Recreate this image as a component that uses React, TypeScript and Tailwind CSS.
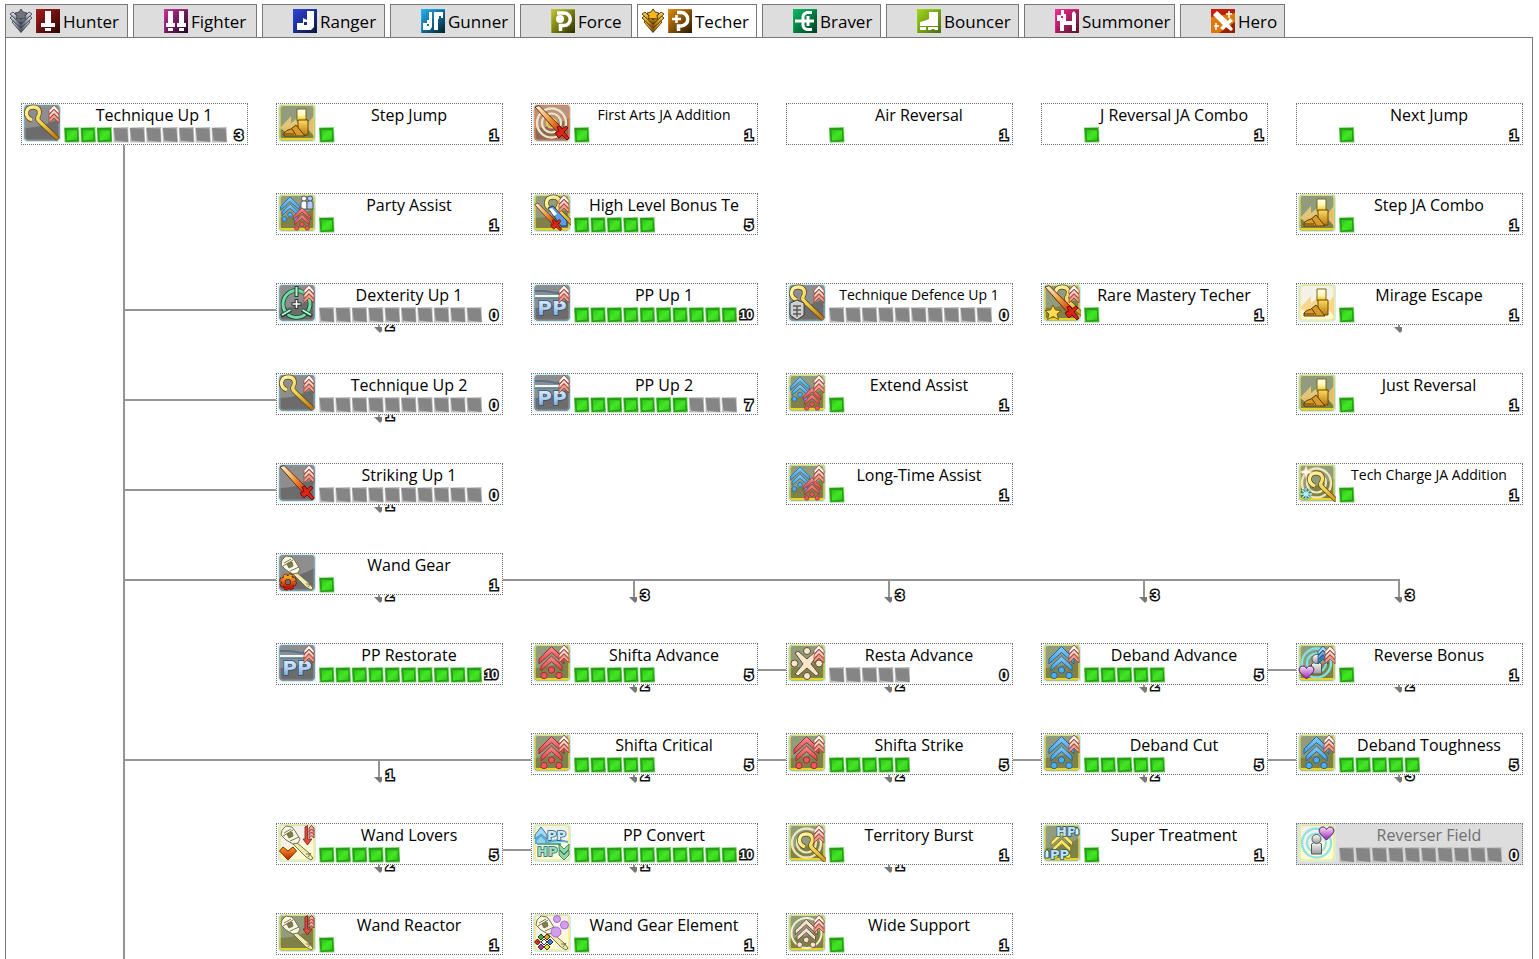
import type { ReactNode } from "react";

type TileKind = "gray" | "olive" | "light" | "orange";

/* ---------- shared gradients ---------- */

function Gradient({ id, from, to, mid, diagonal }: { id: string; from: string; to: string; mid?: string; diagonal?: boolean }) {
  return (
    <linearGradient id={id} x1="0" y1="0" x2={diagonal ? "1" : "0"} y2="1">
      <stop offset="0" stopColor={from} />
      {mid && <stop offset="0.5" stopColor={mid} />}
      <stop offset="1" stopColor={to} />
    </linearGradient>
  );
}

function Gradients() {
  return (
    <svg className="absolute h-0 w-0" aria-hidden="true">
      <defs>
        <Gradient id="pipOn" from="#2fc01c" mid="#41e822" to="#34c81e" diagonal />
        <Gradient id="wood" from="#fff6a8" mid="#f0d24a" to="#b8700c" diagonal />
        <Gradient id="blade" from="#fffbe0" mid="#f0a040" to="#c81808" diagonal />
        <Gradient id="boot" from="#ffdc60" to="#b87a10" />
        <Gradient id="shaft" from="#ffffff" mid="#fff8b0" to="#e8c020" />
        <Gradient id="pp" from="#f0f8ff" mid="#b4d4f4" to="#5c8ed0" />
        <Gradient id="redArrow" from="#fa9090" to="#e03c44" />
        <Gradient id="blueArrow" from="#84ccfa" to="#3c9ce8" />
        <Gradient id="heart" from="#f8e0fa" to="#9a20b0" />
        <Gradient id="fire" from="#f8a020" to="#c81808" />
        <Gradient id="stone" from="#ffffff" to="#9a9a9a" />
        <Gradient id="silver" from="#e8ecf4" mid="#8c94a4" to="#2c3038" />
        <Gradient id="gold" from="#ffe050" mid="#d49418" to="#5c3404" />
      </defs>
    </svg>
  );
}

/* ---------- class tabs ---------- */

function ClassIcon({ id, from, to, children }: { id: string; from: string; to: string; children: ReactNode }) {
  return (
    <svg viewBox="0 0 24 24" className="h-6 w-6 shrink-0" aria-hidden="true">
      <defs>
        <Gradient id={id} from={from} to={to} diagonal />
      </defs>
      <rect width="24" height="24" fill={`url(#${id})`} />
      <path d="M0 24V0H24" fill="none" stroke={from} />
      {children}
    </svg>
  );
}

function Emblem({ fill, dark, star }: { fill: string; dark: string; star: string }) {
  return (
    <svg viewBox="0 0 24 24" className="h-6 w-6" aria-hidden="true">
      <g fill={fill} stroke={dark} strokeWidth="0.900" strokeLinejoin="round">
        <path d="M3 13 6 11 12 18 18 11 21 13 12 23.500Z" />
        <path d="M1 9 4 6.500 12 15 20 6.500 23 9 12 19.500Z" />
        <path d="M1 5 4 3 12 11 20 3 23 5 12 15.500Z" />
        <path d="M12 0 14 3 18 4 16 6.500 16.500 10 12 9.500 7.500 10 8 6.500 6 4 10 3Z" fill={star} />
      </g>
    </svg>
  );
}

const silver = <Emblem fill="url(#silver)" dark="#40444c" star="#70747c" />;
const gold = <Emblem fill="url(#gold)" dark="#4a3410" star="#f4b81c" />;

const classes: { name: string; width: string; emblem?: ReactNode; active?: boolean; icon: ReactNode }[] = [
  {
    name: "Hunter",
    width: "w-[123px]",
    emblem: silver,
    icon: (
      <ClassIcon id="cHunter" from="#a81c1c" to="#2c0404">
        <path d="M9 2h6v12h4v4H5v-4h4zM9 19h6v3H9z" fill="#fff" />
      </ClassIcon>
    ),
  },
  {
    name: "Fighter",
    width: "w-[124px]",
    icon: (
      <ClassIcon id="cFighter" from="#c8329c" to="#20081c">
        <path d="M4 2h5v12h2v4H2v-4h2zM4 19h5v3H4zM15 2h5v12h2v4h-9v-4h2zM15 19h5v3h-5z" fill="#fff" />
      </ClassIcon>
    ),
  },
  {
    name: "Ranger",
    width: "w-[123px]",
    icon: (
      <ClassIcon id="cRanger" from="#2c44e0" to="#0c1438">
        <path d="M14 2h7v16l-3 3H4v-7h6V9l4 2z" fill="#fff" />
        <path d="M11 13h3v3h-3z" fill="#1c2c90" />
      </ClassIcon>
    ),
  },
  {
    name: "Gunner",
    width: "w-[125px]",
    icon: (
      <ClassIcon id="cGunner" from="#24b4f8" to="#02202c">
        <path d="M8 3h3v15l-2 3H2v-7h4v-3h2zM13 3h9v6h-2V7h-2v3h-1v11h-4z" fill="#fff" />
        <path d="M6 15h2v2H6z" fill="#1478a0" />
      </ClassIcon>
    ),
  },
  {
    name: "Force",
    width: "w-[112px]",
    icon: (
      <ClassIcon id="cForce" from="#c4cc30" to="#2c2c00">
        <path d="M6 4h7a6 6 0 0 1 0 12.500H9.500V22" fill="none" stroke="#fff" strokeWidth="3.500" />
        <circle cx="9" cy="10" r="4" fill="#fff" />
      </ClassIcon>
    ),
  },
  {
    name: "Techer",
    width: "w-[120px]",
    emblem: gold,
    active: true,
    icon: (
      <ClassIcon id="cTecher" from="#dc8c10" to="#2c1800">
        <path d="M9 3.500h4a6 6 0 0 1 0 13.500H10.500V22" fill="none" stroke="#fff" strokeWidth="3.500" />
        <path d="M4 10h9M8.500 6v8" stroke="#fff" strokeWidth="2.500" />
      </ClassIcon>
    ),
  },
  {
    name: "Braver",
    width: "w-[119px]",
    icon: (
      <ClassIcon id="cBraver" from="#0cbc64" to="#003c20">
        <path d="M19 3.500h-5a5 5 0 0 0-4 4v9a5 5 0 0 0 4 4h5M2 12h19M15 7v10" fill="none" stroke="#fff" strokeWidth="3" />
      </ClassIcon>
    ),
  },
  {
    name: "Bouncer",
    width: "w-[133px]",
    icon: (
      <ClassIcon id="cBouncer" from="#a0d81c" to="#4c6c10">
        <path d="M12 3h9v14H3v-4l4-1 5-2zM3 18h6v3H3zM11 18h10v3h-3l-1-1h-2l-1 1h-3z" fill="#fff" />
      </ClassIcon>
    ),
  },
  {
    name: "Summoner",
    width: "w-[151px]",
    icon: (
      <ClassIcon id="cSummoner" from="#f82c98" to="#541428">
        <path d="M6 1h3v4h2v7h6V4l2-2 2 3v17h-4v-6H9v6H5V12H2V6h4z" fill="#fff" />
        <path d="M6 7h2v2H6z" fill="#d02878" />
      </ClassIcon>
    ),
  },
  {
    name: "Hero",
    width: "w-[105px]",
    icon: (
      <ClassIcon id="cHero" from="#d02008" to="#8c2004">
        <path d="M0 8 24 4V13L8 24H0Z" fill="#f0a010" opacity="0.7" />
        <path d="M2 6 6 2 17 12 19 9 22 12 18 15 22 20 20 22 15 18 12 21 9 19 12 16Z" fill="#fff" />
        <path d="M18 2v7M15 5h6M5 14v7M3 17h5" stroke="#fff" strokeWidth="1.500" />
      </ClassIcon>
    ),
  },
];

/* ---------- skill icons, drawn on a 38 x 38 tile ---------- */

const tileStyle: Record<TileKind, { top: string; bottom: string; edge: string }> = {
  gray: { top: "#8e8e8e", bottom: "#6c6c6c", edge: "#8a969a" },
  olive: { top: "#919c7c", bottom: "#7f8248", edge: "#ecdf4a" },
  light: { top: "#f4f1e8", bottom: "#fffbd8", edge: "#f8e468" },
  orange: { top: "#b99280", bottom: "#8c6a58", edge: "#ee8048" },
};

function Tile({ kind, children }: { kind: TileKind; children: ReactNode }) {
  const t = tileStyle[kind];
  return (
    <svg viewBox="0 0 38 38" className="block h-[38px] w-[38px]" aria-hidden="true">
      <rect width="38" height="38" rx="4" fill="#c9eef8" />
      <rect x="1.500" y="1" width="35" height="35.500" rx="3" fill={t.top} />
      <path d="M1.500 24C14 24 26 20 36.500 14V33.500a3 3 0 0 1-3 3h-29a3 3 0 0 1-3-3Z" fill={t.bottom} />
      <rect x="2" y="1.500" width="34" height="34.500" rx="3" fill="none" stroke={t.edge} strokeWidth="1.200" />
      {kind === "olive" && <path d="M3 35H35" stroke="#e8d428" strokeWidth="2" />}
      {children}
    </svg>
  );
}

function Ups({ x = 26, y = 1, blue = false }: { x?: number; y?: number; blue?: boolean }) {
  const fills = blue ? ["#a8d8f8", "#68b0e8", "#3880c8"] : ["#fffaf6", "#fcd4c6", "#f49c88"];
  return (
    <g transform={`translate(${x} ${y})`} stroke={blue ? "#284868" : "#9c4038"} strokeWidth="0.800" strokeLinejoin="round">
      {fills.map((f, i) => (
        <path key={f} transform={`translate(0 ${i * 4.5})`} d="M0 5.500 5 0 10 5.500V9L5 4 0 9Z" fill={f} />
      ))}
    </g>
  );
}

function Crook({ x = 0, y = 0 }: { x?: number; y?: number }) {
  const d = "M9 16C1 13 2 3 10 3C18 3 17 10 15 13C14 15 15 16 17 18L35 35";
  return (
    <g transform={`translate(${x} ${y})`} fill="none" strokeLinejoin="round">
      <path d={d} stroke="#5a4418" strokeWidth="4.800" />
      <path d={d} stroke="url(#wood)" strokeWidth="3.400" />
    </g>
  );
}

function Sword() {
  return (
    <g strokeLinejoin="round">
      <path d="M2 3 6 1.500 30 25 25 29Z" fill="url(#blade)" stroke="#6c2c18" />
      <path d="M24 32 22 29 26 27 24 23 27 22 29 25 33 22 35 24 31 28 36 34 34 36 29 31 26 34Z" fill="#dc2414" stroke="#700c08" />
    </g>
  );
}

function PPBars() {
  return (
    <g>
      <path d="M2 7H10C18 7 18 9 26 9H36" fill="none" stroke="#52748c" strokeWidth="2" />
      <path d="M2 12H36" stroke="#e8fbff" strokeWidth="2" />
      <path d="M2 14.500H36" stroke="#4a8ca4" />
      <text x="19" y="31" textAnchor="middle" fontFamily="DejaVu Sans" fontWeight="700" fontSize="20" fill="url(#pp)" stroke="#34506c" strokeWidth="1.500" paintOrder="stroke">
        PP
      </text>
    </g>
  );
}

function Boot() {
  return (
    <g strokeLinejoin="round">
      <path d="M2 24 13 12V19L22 12V33L13 26V32ZM27 22 36 12V32Z" fill="#f6cf78" opacity="0.8" />
      <path d="M19 5H28V17H19Z" fill="url(#shaft)" stroke="#7c6414" />
      <path d="M20 16H30V31H24L20 24Z" fill="url(#boot)" stroke="#684408" />
      <path d="M6 32V29Q8 26 13 25L18 21 27 32Z" fill="#d89a28" stroke="#5c3c08" />
      <path d="M14 25 18 31M6 30H16" stroke="#5c3c08" fill="none" />
    </g>
  );
}

function House({ color, x = 0, y = 0, s = 1 }: { color: "red" | "blue" | "cream" | "yellow"; x?: number; y?: number; s?: number }) {
  const fill = { red: "url(#redArrow)", blue: "url(#blueArrow)", cream: "#fbe0d0", yellow: "#fbe868" }[color];
  const dark = { red: "#94303a", blue: "#2c6490", cream: "#5c4c38", yellow: "#7c7020" }[color];
  const dot = { red: "#f4545c", blue: "#4cacf4", cream: "#fbe0d0", yellow: "#fbe868" }[color];
  return (
    <g transform={`translate(${x} ${y}) scale(${s})`} fill={fill} stroke={dark} strokeWidth="1" strokeLinejoin="round">
      <path d="M18.500 2.500 31 15V20L18.500 8.500 6 20V15Z" />
      <path d="M18.500 12 29 22V27L18.500 17.500 8 27V22Z" />
      <g fill={dot}>
        <circle cx="18.500" cy="26" r="3.200" />
        <circle cx="11" cy="31.500" r="3.200" />
        <circle cx="26" cy="31.500" r="3.200" />
      </g>
    </g>
  );
}

function Club() {
  return (
    <g strokeLinejoin="round" stroke="#6c683c" strokeWidth="0.900" fill="#faf8e4">
      <path d="M18 18 31 29 35 34 33 36 28 33 15 20Z" fill="#f0eab0" />
      <path d="M4 6 8 2 14 3 17 7 22 15 20 19 15 20 8 16 3 11Z" />
      <path d="M6 9 13 5M5 12 15 6M12 17 21 13" fill="none" />
      <path d="M9 10 14 8 15 12 11 14Z" fill="#7c7c54" />
      <path d="M28 30 33 30M30 33 33 29" fill="none" />
    </g>
  );
}

function Rings({ color = "#eee6b8" }: { color?: string }) {
  return (
    <g fill="none" stroke={color}>
      <circle cx="18.500" cy="19" r="14.500" strokeWidth="2.400" />
      <circle cx="18.500" cy="19" r="9.500" strokeWidth="2.200" />
    </g>
  );
}

function Person() {
  return (
    <g fill="url(#stone)" stroke="#50585c">
      <path d="M13.500 30V20Q18.500 16 23.500 20V30Z" />
      <circle cx="18.500" cy="15" r="4.500" />
    </g>
  );
}

function Heart({ x, y, fill = "url(#heart)", stroke = "#502058" }: { x: number; y: number; fill?: string; stroke?: string }) {
  return (
    <path transform={`translate(${x} ${y})`} d="M7.500 14 1.500 8C-1.500 4 1 1 4 1C6 1 7 2.500 7.500 3.500C8 2.500 9 1 11 1C14 1 16.500 4 13.500 8Z" fill={fill} stroke={stroke} />
  );
}

function DownMark() {
  return (
    <g stroke="#7c1c18" strokeWidth="0.800" strokeLinejoin="round">
      <path d="M27 3 29.500 1.500V15H34L29.500 21 25 15H27Z" fill="#e04c44" />
      <path d="M31 4 33.500 1.500 36 4V14L33.500 12 31 14Z" fill="#f4a898" />
      <path d="M31 7.500 33.500 5 36 7.500M31 10.500 33.500 8 36 10.500" fill="none" />
    </g>
  );
}

function Lettering({ x, y, children, fill = "#bfe2fa" }: { x: number; y: number; children: string; fill?: string }) {
  return (
    <text x={x} y={y} fontFamily="DejaVu Sans" fontWeight="700" fontSize="13" fill={fill} stroke="#28586c" strokeWidth="1.500" paintOrder="stroke">
      {children}
    </text>
  );
}

const icons = {
  technique: <Tile kind="gray"><Crook /><Ups /></Tile>,
  boot: <Tile kind="olive"><Boot /></Tile>,
  bootLight: <Tile kind="light"><Boot /></Tile>,
  firstArts: (
    <Tile kind="orange">
      <Rings color="#efe4c4" />
      <circle cx="18.500" cy="19" r="4.500" fill="none" stroke="#f0d040" strokeWidth="2" />
      <Sword />
    </Tile>
  ),
  party: (
    <Tile kind="olive">
      <House color="blue" x={-2} y={1} s={0.76} />
      <g stroke="#34405c" strokeWidth="0.800">
        <path d="M23 15V8Q26 5 29 8V15Z" fill="#fff" />
        <circle cx="26" cy="4.500" r="2.500" fill="#fff" />
        <path d="M29 15V8Q32 5 35 8V15Z" fill="#b4c8f4" />
        <circle cx="32" cy="4.500" r="2.500" fill="#b4c8f4" />
      </g>
      <House color="red" x={11} y={12} s={0.7} />
    </Tile>
  ),
  assist: (
    <Tile kind="olive">
      <House color="blue" x={-2} y={1} s={0.76} />
      <House color="red" x={11} y={12} s={0.7} />
      <Ups />
    </Tile>
  ),
  highLevel: (
    <Tile kind="olive">
      <Crook x={10} y={0} />
      <path d="M15 14 20 12 34 27 34 32 28 32Z" fill="#5c9ce0" stroke="#1c3468" />
      <path d="M16 15 19 14 24 20 21 22Z" fill="#fff" />
      <g transform="translate(0 8) scale(0.800)"><Sword /></g>
      <Ups />
    </Tile>
  ),
  dexterity: (
    <Tile kind="gray">
      <circle cx="18.500" cy="20" r="13.500" fill="none" stroke="#204434" strokeWidth="4.600" />
      <circle cx="18.500" cy="20" r="13.500" fill="none" stroke="#70dca4" strokeWidth="3" />
      <path d="M18.500 2V13M3 32 13 26M34 32 24 26" stroke="#204434" strokeWidth="4" />
      <path d="M18.500 3V12M4 31 12.500 26M33 31 24.500 26" stroke="#b4f4d0" strokeWidth="2" />
      <path d="M18.500 15V25M13.500 20H23.500" stroke="#303030" strokeWidth="3.600" />
      <path d="M18.500 16V24M14.500 20H22.500" stroke="#f4fff8" strokeWidth="1.600" />
      <Ups />
    </Tile>
  ),
  pp: <Tile kind="gray"><PPBars /><Ups /></Tile>,
  techDefence: (
    <Tile kind="gray">
      <Crook />
      <path d="M2 19 9 16 16 19V31L9 36 2 31Z" fill="#cfcfcf" stroke="#3c3c3c" />
      <path d="M5 22H13M5 26H13M5 30H13M9 22V33" stroke="#5a5a5a" strokeWidth="1.400" />
      <Ups />
    </Tile>
  ),
  rare: (
    <Tile kind="olive">
      <Crook x={9} y={0} />
      <Sword />
      <path d="M10 21 12.500 26 18 26.500 14 30 15.500 35.500 10 32.500 4.500 35.500 6 30 2 26.500 7.500 26Z" fill="#fbdc50" stroke="#7c5810" />
      <Ups />
    </Tile>
  ),
  striking: <Tile kind="gray"><Sword /><Ups /></Tile>,
  wandGear: (
    <Tile kind="gray">
      <Club />
      <circle cx="10" cy="28" r="6.500" fill="none" stroke="#5c1408" strokeWidth="4.500" strokeDasharray="3.100 2" />
      <circle cx="10" cy="28" r="5" fill="none" stroke="#5c1408" strokeWidth="5" />
      <circle cx="10" cy="28" r="6.500" fill="none" stroke="url(#fire)" strokeWidth="3" strokeDasharray="3.100 2" />
      <circle cx="10" cy="28" r="4.700" fill="none" stroke="url(#fire)" strokeWidth="3.200" />
    </Tile>
  ),
  techCharge: (
    <Tile kind="olive">
      <Rings />
      <Crook x={8} y={6} />
      <path d="M8 1 9.500 6 15 8 9.500 10 8 15 6.500 10 1 8 6.500 6Z" fill="#fff8e8" stroke="#f0b080" strokeWidth="0.600" />
      <path d="M8 24V36M2 30H14M4 26 12 34M12 26 4 34" stroke="#2c6468" strokeWidth="2.600" />
      <path d="M8 24V36M2 30H14M4 26 12 34M12 26 4 34" stroke="#b4f4f4" strokeWidth="1.300" />
    </Tile>
  ),
  shifta: <Tile kind="olive"><House color="red" /><Ups /></Tile>,
  deband: <Tile kind="olive"><House color="blue" /><Ups /></Tile>,
  resta: (
    <Tile kind="olive">
      <g fill="#fbe4cc" stroke="#5c4c30">
        <path d="M7 9 10 7 19 15 28 7 31 9 23 20 31 30 28 32 19 24 10 32 7 30 15 20Z" />
        <circle cx="19" cy="7" r="3.500" />
        <circle cx="19" cy="32" r="3.500" />
        <circle cx="6.500" cy="19.500" r="3.500" />
        <circle cx="31" cy="19.500" r="3.500" />
      </g>
      <Ups />
    </Tile>
  ),
  reverseBonus: (
    <Tile kind="olive">
      <Rings color="#7ce4e4" />
      <Person />
      <Ups x={20} y={2} blue />
      <Ups x={27} y={2} />
      <Heart x={1} y={21} />
    </Tile>
  ),
  reverserField: (
    <Tile kind="light">
      <Rings color="#8ce4e4" />
      <Person />
      <Heart x={21} y={2} />
    </Tile>
  ),
  wandLovers: (
    <Tile kind="light">
      <Club />
      <DownMark />
      <path d="M10 36 1.500 27 5 23 10 27 15 23 18.500 27Z" fill="url(#fire)" stroke="#6c2c08" strokeLinejoin="round" />
    </Tile>
  ),
  ppConvert: (
    <Tile kind="light">
      <path d="M2 11 8 3 14 11V15L8 10 2 15Z" fill="#a0dcf4" stroke="#3878a0" />
      <path d="M3 20V16L8 11 13 16V19Q22 14 35 18" stroke="#58a8d8" strokeWidth="2" fill="#90d0f0" />
      <path d="M4 20H28" stroke="#58b088" strokeWidth="2" />
      <path d="M26 20 31 25 36 20V25L31 30 26 25ZM26 26 31 31 36 26V31L31 36 26 31Z" fill="#8cd8a8" stroke="#2c7050" strokeWidth="0.800" />
      <Lettering x={14} y={16} fill="#c8ecfc">PP</Lettering>
      <Lettering x={4} y={32} fill="#a0e0b8">HP</Lettering>
    </Tile>
  ),
  territory: <Tile kind="olive"><Rings /><Crook x={8} y={7} /><Ups /></Tile>,
  superTreatment: (
    <Tile kind="olive">
      <House color="yellow" x={3} y={5} s={0.85} />
      <Lettering x={13} y={12}>HP</Lettering>
      <Lettering x={7} y={35}>PP</Lettering>
      <path d="M32 6 34 3 36 6V11H32ZM2 28 4 25 6 28V34H2Z" fill="#d4f0fc" stroke="#28586c" />
    </Tile>
  ),
  wandReactor: <Tile kind="olive"><Club /><DownMark /></Tile>,
  wandElement: (
    <Tile kind="light">
      <Club />
      <g fill="#d49cf0" stroke="#a070c8">
        <circle cx="24" cy="5" r="3.500" />
        <circle cx="31.500" cy="11" r="4" />
        <circle cx="23" cy="18" r="5" />
      </g>
      <g stroke="#202020" strokeWidth="0.900">
        <path d="M8 20 11 23 8 26 5 23Z" fill="#38b030" />
        <path d="M14 20 17 23 14 26 11 23Z" fill="#f89820" />
        <path d="M4.500 25 7.500 28 4.500 31 1.500 28Z" fill="#e02420" />
        <path d="M11 25 14 28 11 31 8 28Z" fill="#ffffff" />
        <path d="M17 25 20 28 17 31 14 28Z" fill="#3080f0" />
        <path d="M8 30 11 33 8 36 5 33Z" fill="#c030c8" />
        <path d="M14 30 17 33 14 36 11 33Z" fill="#e8e020" />
      </g>
    </Tile>
  ),
  wide: (
    <Tile kind="olive">
      <circle cx="18.500" cy="19" r="15" fill="none" stroke="#f4f0d0" strokeWidth="2" />
      <House color="cream" x={2} y={3} s={0.88} />
      <Ups />
    </Tile>
  ),
};

/* ---------- skills ---------- */

interface Skill {
  name: string;
  icon?: keyof typeof icons;
  level: number;
  max: number;
  locked?: boolean;
  compact?: boolean;
}

const sk = (name: string, icon: keyof typeof icons | undefined, level: number, max: number, extra: Partial<Skill> = {}): Skill => ({
  name,
  icon,
  level,
  max,
  ...extra,
});

const rows: (Skill | null)[][] = [
  [
    sk("Technique Up 1", "technique", 3, 10),
    sk("Step Jump", "boot", 1, 1),
    sk("First Arts JA Addition", "firstArts", 1, 1, { compact: true }),
    sk("Air Reversal", undefined, 1, 1),
    sk("J Reversal JA Combo", undefined, 1, 1),
    sk("Next Jump", undefined, 1, 1),
  ],
  [null, sk("Party Assist", "party", 1, 1), sk("High Level Bonus Te", "highLevel", 5, 5), null, null, sk("Step JA Combo", "boot", 1, 1)],
  [
    null,
    sk("Dexterity Up 1", "dexterity", 0, 10),
    sk("PP Up 1", "pp", 10, 10),
    sk("Technique Defence Up 1", "techDefence", 0, 10, { compact: true }),
    sk("Rare Mastery Techer", "rare", 1, 1),
    sk("Mirage Escape", "bootLight", 1, 1),
  ],
  [null, sk("Technique Up 2", "technique", 0, 10), sk("PP Up 2", "pp", 7, 10), sk("Extend Assist", "assist", 1, 1), null, sk("Just Reversal", "boot", 1, 1)],
  [null, sk("Striking Up 1", "striking", 0, 10), null, sk("Long-Time Assist", "assist", 1, 1), null, sk("Tech Charge JA Addition", "techCharge", 1, 1, { compact: true })],
  [null, sk("Wand Gear", "wandGear", 1, 1), null, null, null, null],
  [
    null,
    sk("PP Restorate", "pp", 10, 10),
    sk("Shifta Advance", "shifta", 5, 5),
    sk("Resta Advance", "resta", 0, 5),
    sk("Deband Advance", "deband", 5, 5),
    sk("Reverse Bonus", "reverseBonus", 1, 1),
  ],
  [null, null, sk("Shifta Critical", "shifta", 5, 5), sk("Shifta Strike", "shifta", 5, 5), sk("Deband Cut", "deband", 5, 5), sk("Deband Toughness", "deband", 5, 5)],
  [
    null,
    sk("Wand Lovers", "wandLovers", 5, 5),
    sk("PP Convert", "ppConvert", 10, 10),
    sk("Territory Burst", "territory", 1, 1),
    sk("Super Treatment", "superTreatment", 1, 1),
    sk("Reverser Field", "reverserField", 0, 10, { locked: true }),
  ],
  [null, sk("Wand Reactor", "wandReactor", 1, 1), sk("Wand Gear Element", "wandElement", 1, 1), sk("Wide Support", "wide", 1, 1), null, null],
];

function Pips({ level, max }: { level: number; max: number }) {
  return (
    <svg viewBox="0 0 164 16" className="h-4 w-[164px] shrink-0" role="img" aria-label={`${level} of ${max}`}>
      {Array.from({ length: max }, (_, i) => (
        <g key={i} transform={`translate(${i * 16.4} 0)`}>
          {i < level ? (
            <>
              <path d="M0 .5 15 0 15.500 15.500 .5 15.500Z" fill="#6fdc60" />
              <path d="M.5 1 14 1 15 14.500 1.500 15Z" fill="#2a9c1a" />
              <path d="M2.500 3 13 3.500 13 12.500 3 13.500Z" fill="url(#pipOn)" />
            </>
          ) : (
            <>
              <path d="M0 .5 15 0 15.500 15.500 .5 15.500Z" fill="#bdbdbd" />
              <path d="M.5 1 14 1.500 15 15 2 13.500Z" fill="#858585" />
            </>
          )}
        </g>
      ))}
    </svg>
  );
}

function Level({ value }: { value: number }) {
  return (
    <span
      className={`text-right font-['Liberation_Sans',Arial,sans-serif] leading-4 font-bold text-white [paint-order:stroke] [-webkit-text-stroke:3px_#111] ${
        value > 9 ? "text-xs" : "text-[15px]"
      }`}
    >
      {value}
    </span>
  );
}

function SkillBox({ skill }: { skill: Skill }) {
  return (
    <article
      className={`relative flex h-[42px] border border-dotted border-[#6e6e6e] pl-px ${skill.locked ? "bg-[#dddddd] text-[#707070]" : "bg-white text-black"}`}
    >
      <div className="w-[41px] shrink-0">{skill.icon && icons[skill.icon]}</div>
      <div className="flex min-w-0 grow flex-col">
        <h2 className={`h-[23px] pr-[3px] text-center leading-[22px] whitespace-nowrap ${skill.compact ? "text-sm" : "text-base"}`}>{skill.name}</h2>
        <div className="flex items-center justify-between pr-1">
          <Pips level={skill.level} max={skill.max} />
          <Level value={skill.level} />
        </div>
      </div>
    </article>
  );
}

/* ---------- connectors between skills ---------- */

const COL = 255;
const ROW = 90;

const arrows: [number, number, string][] = [
  [1, 2, "2"], [5, 2, ""],
  [1, 3, "1"],
  [1, 4, "1"],
  [1, 5, "2"], [2, 5, "3"], [3, 5, "3"], [4, 5, "3"], [5, 5, "3"],
  [2, 6, "2"], [3, 6, "2"], [4, 6, "2"], [5, 6, "2"],
  [1, 7, "1"], [2, 7, "2"], [3, 7, "2"], [4, 7, "2"], [5, 7, "3"],
  [1, 8, "2"], [2, 8, "1"], [3, 8, "1"],
];

function Connectors() {
  const y = (row: number) => row * ROW + 27;
  return (
    <svg className="absolute top-0 left-0 h-full w-full overflow-visible" aria-hidden="true">
      <g fill="none" stroke="#949494" strokeWidth="2">
        <path d={`M103 42V900M103 ${y(2)}H256M103 ${y(3)}H256M103 ${y(4)}H256`} />
        <path d={`M103 ${y(5)}H${103 + 5 * COL + 1}`} />
        <path d={`M730 ${y(6)}H770M1240 ${y(6)}H1280M103 ${y(7)}H1280M480 ${y(8)}H515`} />
      </g>
      {arrows.map(([col, row, label]) => {
        const ax = 103 + col * COL;
        const ay = row * ROW;
        return (
          <g key={`${col}-${row}`}>
            <path d={`M${ax} ${ay + 27}V${ay + 46}`} stroke="#949494" strokeWidth="2" />
            <path d={`M${ax - 5} ${ay + 44}H${ax + 3}V${ay + 48}L${ax + 1} ${ay + 50}Z`} fill="#787878" />
            <text x={ax + 11} y={ay + 47} textAnchor="middle" fontFamily="Liberation Sans" fontWeight="700" fontSize="15" fill="#fff" stroke="#111" strokeWidth="3" paintOrder="stroke">
              {label}
            </text>
          </g>
        );
      })}
    </svg>
  );
}

export default function App() {
  return (
    <main className="flex h-screen flex-col overflow-hidden bg-white pt-1 pr-1.5 pl-[5px] font-['Open_Sans','Noto_Sans',sans-serif] text-black">
      <Gradients />
      <nav className="flex shrink-0 gap-[5px]" role="tablist" aria-label="Class">
        {classes.map((c) => (
          <button
            key={c.name}
            type="button"
            role="tab"
            aria-selected={!!c.active}
            className={`flex h-[33px] shrink-0 items-center border border-b-0 border-[#777] pl-[3px] text-[17px] ${c.width} ${c.active ? "bg-white" : "bg-[#dddddd]"}`}
          >
            <span className="mr-[3px] h-6 w-6 shrink-0">{c.emblem}</span>
            {c.icon}
            <span className="pt-0.5 pl-[3px]">{c.name}</span>
          </button>
        ))}
      </nav>
      <section className="grow border border-b-0 border-[#777] pt-[65px] pl-[15px]">
        <div className="relative grid grid-cols-[repeat(6,227px)] gap-x-7 gap-y-12">
          <Connectors />
          {rows.flatMap((row, r) =>
            row.map((skill, c) => (skill ? <SkillBox key={`${r}-${c}`} skill={skill} /> : <div key={`${r}-${c}`} />)),
          )}
        </div>
      </section>
    </main>
  );
}
